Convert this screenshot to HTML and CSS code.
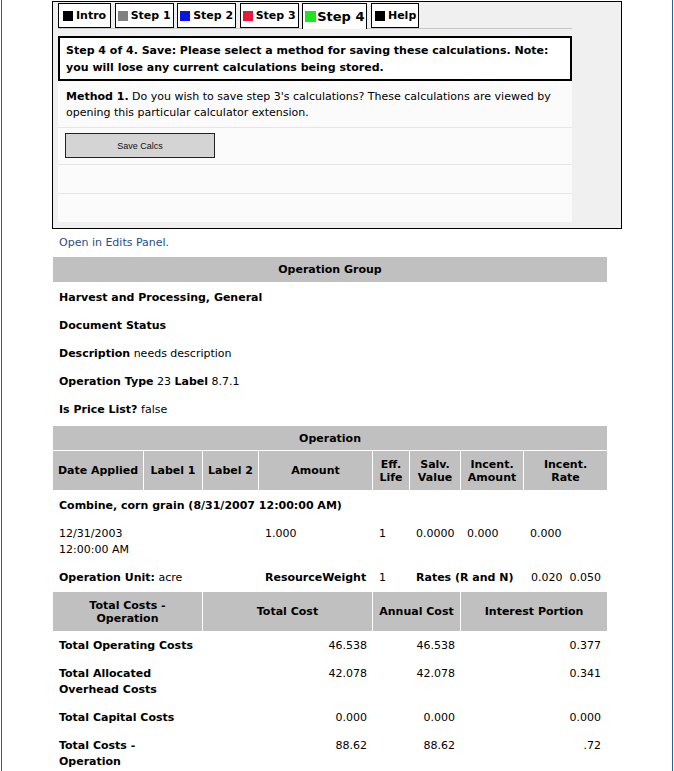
FILE: index.html
```html
<!DOCTYPE html>
<html>
<head>
<meta charset="utf-8">
<link rel="stylesheet" href="styles.css">
</head>
<body>
<div class="page">
  <div class="calc">
    <div class="col">
      <div class="tabs">
        <span class="tab intro"><i class="sq sq-black"></i>Intro</span>
        <span class="tab"><i class="sq sq-gray"></i>Step 1</span>
        <span class="tab"><i class="sq sq-blue"></i>Step 2</span>
        <span class="tab"><i class="sq sq-red"></i>Step 3</span>
        <span class="tab active"><i class="sq sq-green"></i>Step 4</span>
        <span class="tab help"><i class="sq sq-black"></i>Help</span>
      </div>
      <div class="panel">
        <div class="heading">Step 4 of 4. Save: Please select a method for saving these calculations. Note: you will lose any current calculations being stored.</div>
        <div class="method"><b>Method 1.</b> Do you wish to save step 3's calculations? These calculations are viewed by opening this particular calculator extension.</div>
        <div class="prow btnrow"><button class="btn">Save Calcs</button></div>
        <div class="prow empty"></div>
        <div class="prow empty last"></div>
      </div>
    </div>
  </div>
  <div class="editlink"><a class="edits" href="#">Open in Edits Panel.</a></div>
  <table class="grp">
    <tr><th class="title">Operation Group</th></tr>
    <tr><td><b>Harvest and Processing, General</b></td></tr>
    <tr><td><b>Document Status</b></td></tr>
    <tr><td><b>Description</b> needs description</td></tr>
    <tr><td><b>Operation Type</b> 23 <b>Label</b> 8.7.1</td></tr>
    <tr><td><b>Is Price List?</b> false</td></tr>
  </table>
  <table class="ops">
    <colgroup>
      <col class="c1"><col class="c2"><col class="c3"><col class="c4"><col class="c5"><col class="c6"><col class="c7"><col class="c8">
    </colgroup>
    <tr><th class="title sep" colspan="8">Operation</th></tr>
    <tr class="hdr">
      <th>Date Applied</th><th>Label 1</th><th>Label 2</th><th>Amount</th><th>Eff.<br>Life</th><th>Salv.<br>Value</th><th>Incent.<br>Amount</th><th class="last">Incent.<br>Rate</th>
    </tr>
    <tr class="lead"><td colspan="8"><b>Combine, corn grain (8/31/2007 12:00:00 AM)</b></td></tr>
    <tr>
      <td colspan="3">12/31/2003<br>12:00:00 AM</td><td>1.000</td><td>1</td><td>0.0000</td><td>0.000</td><td>0.000</td>
    </tr>
    <tr>
      <td colspan="3"><b>Operation Unit:</b> acre</td><td><b>ResourceWeight</b></td><td>1</td><td colspan="2" class="nw"><b>Rates (R and N)</b></td><td class="r">0.020&nbsp;&nbsp;0.050</td>
    </tr>
    <tr class="hdr">
      <th colspan="2">Total Costs -<br>Operation</th><th colspan="2">Total Cost</th><th colspan="2">Annual Cost</th><th colspan="2" class="last">Interest Portion</th>
    </tr>
    <tr class="first"><td colspan="2"><b>Total Operating Costs</b></td><td colspan="2" class="r">46.538</td><td colspan="2" class="r">46.538</td><td colspan="2" class="r">0.377</td></tr>
    <tr><td colspan="2"><b>Total Allocated<br>Overhead Costs</b></td><td colspan="2" class="r">42.078</td><td colspan="2" class="r">42.078</td><td colspan="2" class="r">0.341</td></tr>
    <tr><td colspan="2"><b>Total Capital Costs</b></td><td colspan="2" class="r">0.000</td><td colspan="2" class="r">0.000</td><td colspan="2" class="r">0.000</td></tr>
    <tr><td colspan="2"><b>Total Costs -<br>Operation</b></td><td colspan="2" class="r">88.62</td><td colspan="2" class="r">88.62</td><td colspan="2" class="r">.72</td></tr>
  </table>
</div>
</body>
</html>
```
FILE: styles.css
```css
html, body {
  margin: 0;
  padding: 0;
  background: #fff;
}
body {
  font-family: "DejaVu Sans", Verdana, sans-serif;
  font-size: 11px;
  color: #000;
}
.page {
  margin-left: 1px;
  min-height: 800px;
  border-left: 1px solid #2d6297;
  border-right: 1px solid #2d6297;
  padding: 1px 0 0 50px;
  box-sizing: border-box;
  width: 672px;
}
.calc {
  width: 570px;
  box-sizing: border-box;
  border: 1px solid #000;
  background: #f0f0f0;
  padding: 1px 49px 6px 5px;
}
.col {
  width: 514px;
}
.tabs {
  display: flex;
  gap: 3.5px;
  height: 25px;
  border-bottom: 1px solid #c8c8c8;
}
.tab {
  display: flex;
  align-items: center;
  gap: 3px;
  height: 25px;
  box-sizing: border-box;
  padding: 0 2px;
  border: 1px solid #000;
  background: #fff;
  font-weight: bold;
  font-size: 11px;
}
.tab.intro {
  padding: 0 4px 0 4px;
}
.tab.help {
  padding: 0 2px 0 3px;
}
.tab.active {
  font-size: 13px;
  border-bottom: none;
  height: 26px;
  padding: 0 2px 0 2px;
  gap: 1px;
}
.sq {
  display: inline-block;
  width: 10px;
  height: 10px;
}
.tab.active .sq {
  width: 11px;
  height: 11px;
}
.sq-black { background: #000; }
.sq-gray { background: #808080; }
.sq-blue { background: #0a14e6; }
.sq-red { background: #e8173d; }
.sq-green { background: #1ee61e; }
.panel {
  margin-top: 7px;
  background: #fbfbfb;
}
.heading {
  border: 2px solid #000;
  background: #fff;
  font-weight: bold;
  line-height: 17px;
  padding: 4px 6px 3px 6px;
}
.method {
  padding: 8px 8px 6px 8px;
  line-height: 16px;
  border-bottom: 1px solid #e6e6e6;
}
.prow {
  border-bottom: 1px solid #e6e6e6;
}
.prow.last {
  border-bottom: none;
}
.btnrow {
  padding: 5px 7px 6px 7px;
  height: 25px;
}
.btn {
  display: block;
  width: 150px;
  height: 25px;
  background: #d4d4d4;
  border: 1px solid #222;
  font-family: "Liberation Sans", Arial, sans-serif;
  font-size: 9px;
  color: #111;
  padding: 0;
}
.empty {
  height: 28px;
}
.editlink {
  padding: 7px 0 0 7px;
  line-height: 14px;
  height: 21px;
}
.edits {
  color: #1f4e8a;
  text-decoration: none;
}
table {
  border-collapse: separate;
  border-spacing: 0;
  width: 554px;
  margin-left: 1px;
  table-layout: fixed;
  font-size: 11px;
}
th {
  background: #c0c0c0;
  font-weight: bold;
  text-align: center;
  padding: 0 2px;
}
th.title {
  height: 25px;
  padding: 0;
}
.grp td {
  padding: 9px 6px 5px 6px;
  line-height: 14px;
}
.ops {
  margin-top: 4px;
}
th.sep {
  height: 24px;
  border-bottom: 1px solid #fff;
}
.hdr th {
  height: 39px;
  line-height: 13px;
  border-right: 1px solid #fff;
  padding: 0;
}
.hdr th.last {
  border-right: none;
}
.ops td {
  padding: 6px 6px;
  line-height: 16px;
  vertical-align: top;
}
.ops tr.lead td {
  padding-top: 8px;
}
.ops tr.first td {
  padding-top: 7px;
}
.ops td.r {
  text-align: right;
}
.ops td.nw {
  white-space: nowrap;
}
col.c1 { width: 91px; }
col.c2 { width: 59px; }
col.c3 { width: 56px; }
col.c4 { width: 114px; }
col.c5 { width: 37px; }
col.c6 { width: 51px; }
col.c7 { width: 63px; }
col.c8 { width: 83px; }
```
